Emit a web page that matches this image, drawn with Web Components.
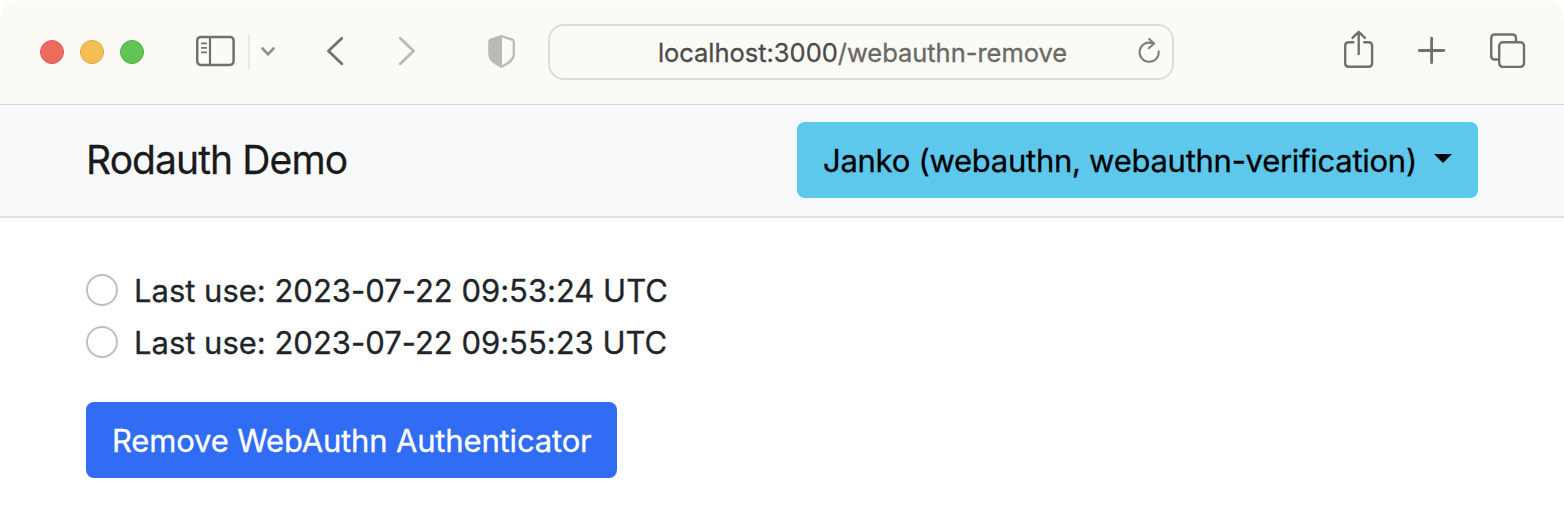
<!DOCTYPE html>
<html lang="en">
<head>
<meta charset="utf-8">
<title>Rodauth Demo</title>
<style>
html, body { margin: 0; background: #fff; }
body { font-family: Inter, "Liberation Sans", sans-serif; color: #212529; -webkit-text-stroke: .3px; }
</style>
</head>
<body>
<browser-window>
  <browser-toolbar slot="toolbar" host="localhost:3000" path="/webauthn-remove"></browser-toolbar>
  <site-navbar>
    <span slot="brand">Rodauth Demo</span>
    <app-button variant="info" caret style="--spacing:-0.27px">Janko (webauthn, webauthn-verification)</app-button>
  </site-navbar>
  <page-content>
    <radio-option>Last use: 2023-07-22 09:53:24 UTC</radio-option>
    <radio-option>Last use: 2023-07-22 09:55:23 UTC</radio-option>
    <app-button class="submit" variant="primary" style="--spacing:-0.16px">Remove WebAuthn Authenticator</app-button>
  </page-content>
</browser-window>
<script>
class Base extends HTMLElement {
  connectedCallback() {
    if (!this.shadowRoot) this.attachShadow({ mode: 'open' }).innerHTML = this.view();
  }
}

const icons = {
  sidebar: ['196 24 39 56', '<rect x="197.2" y="36.9" width="36.4" height="28" rx="3.6" stroke-width="2.5"/><path d="M210 37v28" stroke-width="2.2"/><path d="M201.8 43.3h4.4M201.8 47.9h4.4M201.8 52.4h4.4" stroke-width="1.8"/>'],
  chevron: ['260 24 16 56', '<path d="M262.6 48.6l5.4 5.6 5.4-5.6" stroke-width="2.8"/>'],
  back: ['326 24 18 56', '<path d="M341.8 38.3L328.5 51l13.3 12.7" stroke-width="2.8"/>'],
  forward: ['398 24 18 56', '<path d="M400.3 38.3L413.6 51l-13.3 12.7" stroke-width="2.8"/>'],
  shield: ['487 24 29 56', '<path d="M501.6 36.1l10.7 3.6q1.5.5 1.5 2v12.6c0 5.5-5 8.8-12.2 12.4-7.2-3.6-12.2-6.9-12.2-12.4V41.7q0-1.5 1.5-2z" stroke-width="2.3"/><path d="M502 36L489 40.3V54.5c0 5.5 5.5 9 13 12.5z" fill="currentColor" stroke="none"/>'],
  reload: ['1137 26 25 52', '<path d="M1152.3 43.2a9.6 9.6 0 1 0 6.4 8.1" stroke-width="2"/><path d="M1149.2 38.9l5 4.6-5.5 4.8" stroke-width="2"/>'],
  share: ['1343 24 32 56', '<path d="M1353.3 42.2h-4.5q-3.6 0-3.6 3.6v17.4q0 3.6 3.6 3.6h19.7q3.6 0 3.6-3.6V45.8q0-3.6-3.6-3.6h-4.3" stroke-width="2.4"/><path d="M1358.7 54V32.5M1352.5 37.9l6.2-6 6.2 6" stroke-width="2.4"/>'],
  plus: ['1417 24 30 56', '<path d="M1419.3 50.5h24.6M1431.6 38.2v24.6" stroke-width="2.8"/>'],
  tabs: ['1489 24 38 56', '<path d="M1498 59.5h-3.2q-3.6 0-3.6-3.6V38.1q0-3.6 3.6-3.6h17.6q3.6 0 3.6 3.6V41.5" stroke-width="2.4"/><rect x="1499.2" y="42.2" width="24.8" height="24.7" rx="3.6" stroke-width="2.4"/>']
};

customElements.define('ui-icon', class extends Base {
  view() {
    const [box, art] = icons[this.getAttribute('name')];
    const [, , w, h] = box.split(' ');
    return `<style>:host{display:block;flex:none;color:#71706c}svg{display:block}</style>
      <svg width="${w}" height="${h}" viewBox="${box}" fill="none" stroke="currentColor" stroke-linecap="round" stroke-linejoin="round">${art}</svg>`;
  }
});

customElements.define('window-controls', class extends Base {
  view() {
    return `<style>
      :host{display:flex;gap:16px;flex:none}
      i{box-sizing:border-box;width:24px;height:24px;border-radius:50%;background:#ec6a5e;border:1px solid #d9584e}
      i:nth-of-type(2){background:#f4bf50;border-color:#d9a440}
      i:nth-of-type(3){background:#61c555;border-color:#51ac43}
    </style><i></i><i></i><i></i>`;
  }
});

customElements.define('address-bar', class extends Base {
  view() {
    return `<style>
      :host{display:grid;grid-template-columns:1fr auto 1fr;grid-template-rows:52px;align-items:center;box-sizing:border-box;width:626px;height:56px;
        border:2px solid #dddcd7;border-radius:16px;flex:none;font-size:25.5px;line-height:50px;color:#6a6965}
      p{grid-column:2;margin:0;padding-top:2px;white-space:nowrap;letter-spacing:-.03px;transform:translateX(1.5px)}
      b{font-weight:400;color:#4b4b4a}
      ui-icon{grid-column:3;justify-self:end;margin-right:10px;color:#7e7d79}
    </style><p><b>${this.getAttribute('host')}</b>${this.getAttribute('path')}</p><ui-icon name="reload"></ui-icon>`;
  }
});

customElements.define('browser-toolbar', class extends Base {
  view() {
    return `<style>
      :host{display:flex;align-items:center;box-sizing:border-box;height:105px;padding:1px 37px 1px 40px;
        background:linear-gradient(#fff,#fff) top/100% 1px no-repeat,#fbfaf5;border-bottom:1px solid #d0d2d3;border-radius:20px 20px 0 0}
      .sidebar{margin-left:52px}
      .rule{width:2px;height:36px;background:#ebeae6;margin:0 10px 0 13px}
      .back{margin-left:50px}
      .forward{margin-left:54px;color:#bbbab5}
      .shield{margin-left:71px;color:#bbbab5}
      .chevron{color:#92918d}
      address-bar{margin-left:32px}
      .actions{display:flex;gap:42px;margin-left:auto}
    </style>
    <window-controls></window-controls>
    <ui-icon class="sidebar" name="sidebar"></ui-icon><span class="rule"></span><ui-icon class="chevron" name="chevron"></ui-icon>
    <ui-icon class="back" name="back"></ui-icon><ui-icon class="forward" name="forward"></ui-icon>
    <ui-icon class="shield" name="shield"></ui-icon>
    <address-bar host="${this.getAttribute('host')}" path="${this.getAttribute('path')}"></address-bar>
    <div class="actions"><ui-icon name="share"></ui-icon><ui-icon name="plus"></ui-icon><ui-icon name="tabs"></ui-icon></div>`;
  }
});

customElements.define('browser-window', class extends Base {
  view() {
    return `<style>:host{display:flex;flex-direction:column;height:526px;overflow:hidden;background:#fff}</style>
      <slot name="toolbar"></slot><slot></slot>`;
  }
});

customElements.define('site-navbar', class extends Base {
  view() {
    return `<style>
      :host{display:flex;justify-content:space-between;align-items:center;box-sizing:border-box;height:113px;padding:0 86px 1px;
        background:#f8f9fb;border-bottom:2px solid #dee2e6}
      .brand{font-size:39px;line-height:60px;letter-spacing:-.9px;color:#1a1a1b;white-space:nowrap}
    </style><span class="brand"><slot name="brand"></slot></span><slot></slot>`;
  }
});

customElements.define('app-button', class extends Base {
  view() {
    const primary = this.getAttribute('variant') === 'primary';
    return `<style>
      :host{display:block;flex:none;width:${primary ? 531 : 681}px}
      button{display:flex;align-items:center;width:100%;height:76px;padding:${primary ? '1px' : '2px'} 26px 0;border:0;border-radius:8px;
        background:${primary ? '#316cf4' : '#5dc7ec'};color:${primary ? '#fff' : '#000'};
        font:400 31px/48px Inter,"Liberation Sans",sans-serif;letter-spacing:var(--spacing);white-space:nowrap;-webkit-text-stroke:.3px}
      i{margin:-6px 0 0 auto;border:9px solid transparent;border-top-color:currentColor;border-bottom:0}
    </style><button type="button"><span><slot></slot></span>${this.hasAttribute('caret') ? '<i></i>' : ''}</button>`;
  }
});

customElements.define('radio-option', class extends Base {
  view() {
    return `<style>
      :host{display:block;height:48px;margin-bottom:4px}
      label{display:flex;align-items:center;gap:16px;height:48px;font-size:31px;line-height:46px;letter-spacing:-.01px;white-space:nowrap}
      input{appearance:none;box-sizing:border-box;width:32px;height:32px;margin:0;border:2px solid #bfbfbf;border-radius:50%;background:#fff}
      span{padding-top:2px}
    </style><label><input type="radio" name="credential"><span><slot></slot></span></label>`;
  }
});

customElements.define('page-content', class extends Base {
  view() {
    return `<style>:host{display:block;padding:48px 86px}::slotted(.submit){margin-top:36px}</style><slot></slot>`;
  }
});
</script>
</body>
</html>
